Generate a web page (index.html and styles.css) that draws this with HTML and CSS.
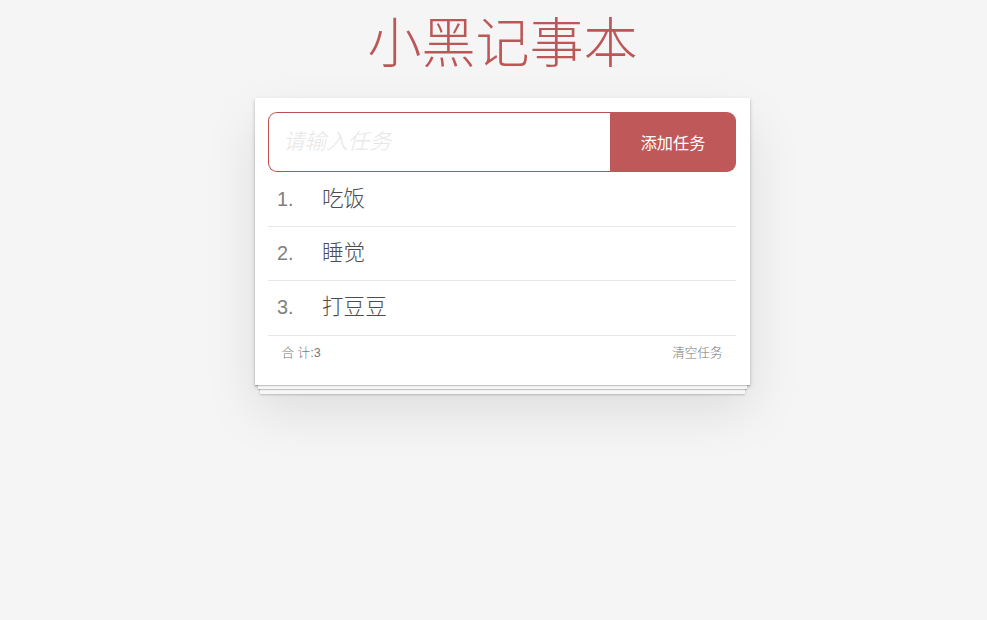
FILE: index.html
```html
<!DOCTYPE html>
<html lang="zh-CN">
<head>
<meta charset="utf-8">
<title>小黑记事本</title>
<link rel="stylesheet" href="styles.css">
</head>
<body>
<div class="page">
  <h1 class="title">小黑记事本</h1>
  <section class="app">
    <header class="header">
      <input class="new-todo" type="text" placeholder="请输入任务">
      <button class="add">添加任务</button>
    </header>
    <ul class="todo-list">
      <li><span class="index">1.</span><label>吃饭</label></li>
      <li><span class="index">2.</span><label>睡觉</label></li>
      <li><span class="index">3.</span><label>打豆豆</label></li>
    </ul>
    <footer class="footer">
      <span class="todo-count">合 计:<strong>3</strong></span>
      <button class="clear">清空任务</button>
    </footer>
  </section>
</div>
</body>
</html>
```

FILE: styles.css
```css
html, body {
  margin: 0;
  padding: 0;
  height: 100%;
}
body {
  background: #f5f5f5;
  color: #4d4d4d;
  font: 300 12.6px "Liberation Sans", "Noto Sans CJK SC", sans-serif;
  line-height: 1.4em;
}
.page {
  min-height: 100%;
  padding-left: 18px;
  box-sizing: border-box;
  overflow: hidden;
}
.title {
  margin: 0 auto;
  padding-top: 8px;
  width: 495px;
  height: 98px;
  box-sizing: border-box;
  text-align: center;
  font-family: "Noto Sans CJK SC", sans-serif;
  font-size: 54px;
  font-weight: 300;
  line-height: 64px;
  color: rgba(175, 47, 47, 0.8);
}
.app {
  width: 495px;
  margin: 0 auto 60px;
  padding: 14px 14px 13px 13px;
  box-sizing: border-box;
  background: #fff;
  position: relative;
  box-shadow:
    0 1px 1px rgba(0, 0, 0, 0.2),
    0 7px 0 -3px #f6f6f6,
    0 8px 1px -3px rgba(0, 0, 0, 0.2),
    0 14px 0 -5px #f6f6f6,
    0 15px 2px -5px rgba(0, 0, 0, 0.2),
    0 2px 4px 0 rgba(0, 0, 0, 0.2),
    0 25px 50px 0 rgba(0, 0, 0, 0.1);
}
.header {
  display: flex;
  height: 60px;
  margin-bottom: 1px;
}
.new-todo {
  flex: 1;
  min-width: 0;
  margin: 0;
  padding: 0 14px;
  border: 1px solid rgba(175, 47, 47, 0.85);
  border-right: 0;
  border-radius: 9px 0 0 9px;
  font-family: "Liberation Sans", "Noto Sans CJK SC", sans-serif;
  font-size: 21.6px;
  color: #4d4d4d;
  outline: none;
  background: #fff;
}
.new-todo::placeholder {
  font-style: italic;
  font-weight: 300;
  color: #e6e6e6;
}
.add {
  width: 126px;
  margin: 0;
  padding: 0;
  border: 0;
  border-radius: 0 9px 9px 0;
  background: rgba(175, 47, 47, 0.8);
  color: #fff;
  font-family: "Liberation Sans", "Noto Sans CJK SC", sans-serif;
  font-size: 16.2px;
  cursor: pointer;
}
.todo-list {
  margin: 0;
  padding: 0;
  list-style: none;
}
.todo-list li {
  position: relative;
  display: flex;
  align-items: flex-start;
  height: 54px;
  box-sizing: border-box;
  border-bottom: 1px solid #e6e6e6;
  font-size: 21.6px;
}
.todo-list li:last-child {
  border-bottom: 0;
  height: 54px;
}
.index {
  width: 45px;
  padding: 15px 0 0 9px;
  font-size: 19.8px;
  line-height: 1.2;
  color: gray;
}
.todo-list label {
  padding: 13px 13.5px 13.5px 0;
  line-height: 1.2;
  font-family: "Liberation Sans", "Noto Sans CJK SC", sans-serif;
  color: #4d4d4d;
}
.footer {
  display: flex;
  justify-content: space-between;
  align-items: center;
  height: 37px;
  padding: 0 13.5px 0 13.5px;
  box-sizing: border-box;
  border-top: 1px solid #e6e6e6;
  color: #777;
  font-size: 12.6px;
}
.todo-count strong {
  font-weight: 300;
}
.clear {
  margin: 0;
  padding: 0;
  border: 0;
  background: none;
  color: #777;
  font: inherit;
  cursor: pointer;
}
```
